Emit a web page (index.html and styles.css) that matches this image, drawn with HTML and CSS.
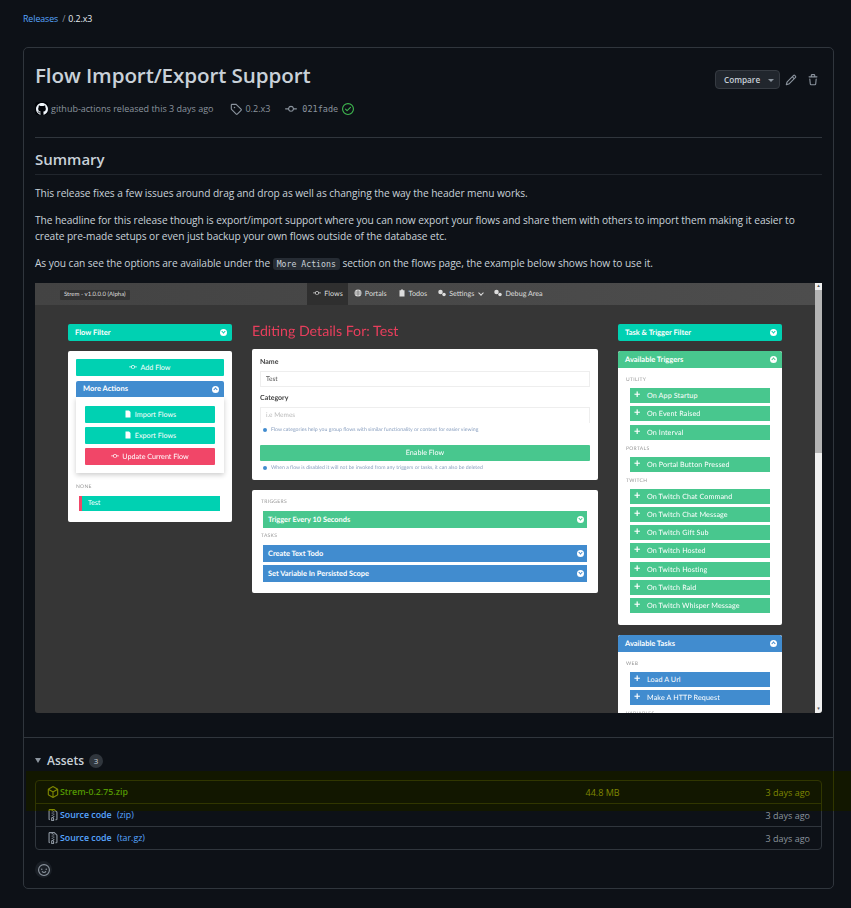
FILE: index.html
```html
<!DOCTYPE html>
<html lang="en">
<head>
    <meta charset="UTF-8">
    <meta name="viewport" content="width=device-width, initial-scale=1.0">
    <title>Release 0.2.x3</title>
    <link rel="stylesheet" href="styles.css">
</head>
<body>
    <svg class="sprites" width="0" height="0">
        <symbol id="i-github" viewBox="0 0 16 16"><path d="M8 0C3.58 0 0 3.58 0 8c0 3.54 2.29 6.53 5.47 7.59.4.07.55-.17.55-.38 0-.19-.01-.82-.01-1.49-2.01.37-2.53-.49-2.69-.94-.09-.23-.48-.94-.82-1.13-.28-.15-.68-.52-.01-.53.63-.01 1.08.58 1.23.82.72 1.21 1.87.87 2.33.66.07-.52.28-.87.51-1.07-1.78-.2-3.64-.89-3.64-3.95 0-.87.31-1.59.82-2.15-.08-.2-.36-1.02.08-2.12 0 0 .67-.21 2.2.82.64-.18 1.32-.27 2-.27.68 0 1.36.09 2 .27 1.53-1.04 2.2-.82 2.2-.82.44 1.1.16 1.92.08 2.12.51.56.82 1.27.82 2.15 0 3.07-1.87 3.75-3.65 3.95.29.25.54.73.54 1.48 0 1.07-.01 1.93-.01 2.2 0 .21.15.46.55.38A8.013 8.013 0 0016 8c0-4.42-3.58-8-8-8z"/></symbol>
        <symbol id="i-tag" viewBox="0 0 16 16"><path d="M1 7.775V2.75C1 1.784 1.784 1 2.75 1h5.025c.464 0 .91.184 1.238.513l6.25 6.25a1.75 1.75 0 0 1 0 2.474l-5.026 5.026a1.75 1.75 0 0 1-2.474 0l-6.25-6.25A1.752 1.752 0 0 1 1 7.775Zm1.5 0c0 .066.026.13.073.177l6.25 6.25a.25.25 0 0 0 .354 0l5.025-5.025a.25.25 0 0 0 0-.354l-6.25-6.25a.25.25 0 0 0-.177-.073H2.75a.25.25 0 0 0-.25.25ZM6 5a1 1 0 1 1 0 2 1 1 0 0 1 0-2Z"/></symbol>
        <symbol id="i-commit" viewBox="0 0 16 16"><path d="M11.93 8.5a4.002 4.002 0 0 1-7.86 0H.75a.75.75 0 0 1 0-1.5h3.32a4.002 4.002 0 0 1 7.86 0h3.32a.75.75 0 0 1 0 1.5Zm-1.43-.75a2.5 2.5 0 1 0-5 0 2.5 2.5 0 0 0 5 0Z"/></symbol>
        <symbol id="i-check" viewBox="0 0 16 16"><path d="M0 8a8 8 0 1 1 16 0A8 8 0 0 1 0 8Zm1.5 0a6.5 6.5 0 1 0 13 0 6.5 6.5 0 0 0-13 0Zm10.28-1.72-4.5 4.5a.75.75 0 0 1-1.06 0l-2-2a.751.751 0 0 1 .018-1.042.751.751 0 0 1 1.042-.018l1.47 1.47 3.97-3.97a.751.751 0 0 1 1.042.018.751.751 0 0 1 .018 1.042Z"/></symbol>
        <symbol id="i-pencil" viewBox="0 0 16 16"><path d="M11.013 1.427a1.75 1.75 0 0 1 2.474 0l1.086 1.086a1.75 1.75 0 0 1 0 2.474l-8.61 8.61c-.21.21-.47.364-.756.445l-3.251.93a.75.75 0 0 1-.927-.928l.929-3.25c.081-.286.235-.547.445-.758l8.61-8.61Zm.176 4.823L9.75 4.81l-6.286 6.287a.253.253 0 0 0-.064.108l-.558 1.953 1.953-.558a.253.253 0 0 0 .108-.064Zm1.238-3.763a.25.25 0 0 0-.354 0L10.811 3.75l1.439 1.44 1.263-1.263a.25.25 0 0 0 0-.354Z"/></symbol>
        <symbol id="i-trash" viewBox="0 0 16 16"><path d="M11 1.75V3h2.25a.75.75 0 0 1 0 1.5H2.75a.75.75 0 0 1 0-1.5H5V1.75C5 .784 5.784 0 6.75 0h2.5C10.216 0 11 .784 11 1.75ZM4.496 6.675l.66 6.6a.25.25 0 0 0 .249.225h5.19a.25.25 0 0 0 .249-.225l.66-6.6a.75.75 0 0 1 1.492.149l-.66 6.6A1.748 1.748 0 0 1 10.595 15h-5.19a1.75 1.75 0 0 1-1.741-1.575l-.66-6.6a.75.75 0 1 1 1.492-.15ZM6.5 1.75V3h3V1.75a.25.25 0 0 0-.25-.25h-2.5a.25.25 0 0 0-.25.25Z"/></symbol>
        <symbol id="i-package" viewBox="0 0 16 16"><path d="m8.878.392 5.25 3.045c.54.314.872.89.872 1.514v6.098a1.75 1.75 0 0 1-.872 1.514l-5.25 3.045a1.75 1.75 0 0 1-1.756 0l-5.25-3.045A1.75 1.75 0 0 1 1 11.049V4.951c0-.624.332-1.201.872-1.514L7.122.392a1.75 1.75 0 0 1 1.756 0ZM7.875 1.69l-4.63 2.685L8 7.133l4.755-2.758-4.63-2.685a.248.248 0 0 0-.25 0ZM2.5 5.677v5.372c0 .09.047.171.125.216l4.625 2.683V8.432Zm6.25 8.271 4.625-2.683a.25.25 0 0 0 .125-.216V5.677L8.75 8.432Z"/></symbol>
        <symbol id="i-zip" viewBox="0 0 16 16"><path d="M3.5 1.75v11.5c0 .09.048.173.126.217a.75.75 0 0 1-.752 1.298A1.748 1.748 0 0 1 2 13.25V1.75C2 .784 2.784 0 3.75 0h5.586c.464 0 .909.185 1.237.513l2.914 2.914c.329.328.513.773.513 1.237v8.586A1.75 1.75 0 0 1 12.25 15h-.5a.75.75 0 0 1 0-1.5h.5a.25.25 0 0 0 .25-.25V4.664a.25.25 0 0 0-.073-.177L9.513 1.573a.25.25 0 0 0-.177-.073H7.25a.75.75 0 0 1 0 1.5h-.5a.75.75 0 0 1 0-1.5h-3a.25.25 0 0 0-.25.25Zm3.75 8.75h.5c.966 0 1.75.784 1.75 1.75v3a.75.75 0 0 1-.75.75h-2.5a.75.75 0 0 1-.75-.75v-3c0-.966.784-1.75 1.75-1.75ZM6 5.25a.75.75 0 0 1 .75-.75h.5a.75.75 0 0 1 0 1.5h-.5A.75.75 0 0 1 6 5.25Zm.75 2.25h.5a.75.75 0 0 1 0 1.5h-.5a.75.75 0 0 1 0-1.5ZM8 6.75A.75.75 0 0 1 8.75 6h.5a.75.75 0 0 1 0 1.5h-.5A.75.75 0 0 1 8 6.75ZM8.75 3h.5a.75.75 0 0 1 0 1.5h-.5a.75.75 0 0 1 0-1.5ZM8 9.75A.75.75 0 0 1 8.75 9h.5a.75.75 0 0 1 0 1.5h-.5A.75.75 0 0 1 8 9.75Zm-1 2.5v2.25h1v-2.25a.25.25 0 0 0-.25-.25h-.5a.25.25 0 0 0-.25.25Z"/></symbol>
        <symbol id="i-smiley" viewBox="0 0 16 16"><path d="M8 0a8 8 0 1 1 0 16A8 8 0 0 1 8 0ZM1.5 8a6.5 6.5 0 1 0 13 0 6.5 6.5 0 0 0-13 0Zm3.82 1.636a.75.75 0 0 1 1.038.175l.007.009c.103.118.22.222.35.31.264.178.683.37 1.285.37.602 0 1.02-.192 1.285-.371.13-.088.247-.192.35-.31l.007-.008a.75.75 0 0 1 1.222.87l-.022-.015c.02.013.021.015.021.015v.001l-.001.002-.002.003-.005.007-.014.019a2.066 2.066 0 0 1-.184.213c-.16.166-.338.316-.53.445-.63.418-1.37.638-2.127.629-.946 0-1.652-.308-2.126-.63a3.331 3.331 0 0 1-.715-.657l-.014-.02-.005-.006-.002-.003v-.002h-.001l.613-.432-.614.43a.75.75 0 0 1 .183-1.044ZM12 7a1 1 0 1 1-2 0 1 1 0 0 1 2 0ZM5 8a1 1 0 1 1 0-2 1 1 0 0 1 0 2Z"/></symbol>
        <!-- rough app icons for the screenshot -->
        <symbol id="i-globe" viewBox="0 0 16 16"><circle cx="8" cy="8" r="7"/><path d="M1 6h14M1 10h14M8 1v14" fill="none" stroke="#494949" stroke-width="1"/></symbol>
        <symbol id="i-clip" viewBox="0 0 16 16"><path d="M3 2.500h3V1h4v1.500h3V15H3Z"/></symbol>
        <symbol id="i-gears" viewBox="0 0 16 16"><circle cx="5" cy="6" r="4.500"/><circle cx="12" cy="11" r="3.500"/></symbol>
        <symbol id="i-file" viewBox="0 0 16 16"><path d="M3 1h7l3 3v11H3Z"/></symbol>
    </svg>

    <nav class="crumbs"><a href="#">Releases</a><span class="crumb-sep">/</span><span>0.2.x3</span></nav>

    <section class="release">
        <header class="release-head">
            <div class="head-row">
                <h1>Flow Import/Export Support</h1>
                <div class="head-actions">
                    <button class="compare">Compare<span class="caret"></span></button>
                    <svg class="octicon action-icon"><use href="#i-pencil"/></svg>
                    <svg class="octicon action-icon"><use href="#i-trash"/></svg>
                </div>
            </div>
            <div class="meta">
                <span class="avatar"><svg class="octicon"><use href="#i-github"/></svg></span>
                <span class="meta-author">github-actions released this 3 days ago</span>
                <svg class="octicon meta-tag"><use href="#i-tag"/></svg>
                <span>0.2.x3</span>
                <svg class="octicon meta-commit"><use href="#i-commit"/></svg>
                <code class="sha">021fade</code>
                <svg class="octicon meta-check"><use href="#i-check"/></svg>
            </div>
        </header>

        <div class="markdown">
            <h2>Summary</h2>
            <p>This release fixes a few issues around drag and drop as well as changing the way the header menu works.</p>
            <p>The headline for this release though is export/import support where you can now export your flows and share them with others to import them making it easier to create pre-made setups or even just backup your own flows outside of the database etc.</p>
            <p>As you can see the options are available under the <code>More Actions</code> section on the flows page, the example below shows how to use it.</p>

            <div class="shot">
                <div class="shot-page">
                    <div class="app-bar">
                        <span class="app-version">Strem - v1.0.0.0 (Alpha)</span>
                        <div class="app-nav">
                            <span class="app-tab active"><svg class="app-icon"><use href="#i-commit"/></svg>Flows</span>
                            <span class="app-tab"><svg class="app-icon"><use href="#i-globe"/></svg>Portals</span>
                            <span class="app-tab"><svg class="app-icon"><use href="#i-clip"/></svg>Todos</span>
                            <span class="app-tab"><svg class="app-icon"><use href="#i-gears"/></svg>Settings<i class="tab-chevron"></i></span>
                            <span class="app-tab"><svg class="app-icon"><use href="#i-gears"/></svg>Debug Area</span>
                        </div>
                    </div>
                    <div class="app-cols">
                        <div class="app-col">
                            <div class="panel-bar teal">Flow Filter<i class="dot"></i></div>
                            <div class="app-card left-card">
                                <div class="app-btn teal add-flow"><svg class="app-icon"><use href="#i-commit"/></svg>Add Flow</div>
                                <div class="panel-bar blue more-bar">More Actions<i class="dot up"></i></div>
                                <div class="more-body">
                                    <div class="app-btn teal"><svg class="app-icon"><use href="#i-file"/></svg>Import Flows</div>
                                    <div class="app-btn teal"><svg class="app-icon"><use href="#i-file"/></svg>Export Flows</div>
                                    <div class="app-btn red"><svg class="app-icon"><use href="#i-commit"/></svg>Update Current Flow</div>
                                </div>
                                <div class="app-label none-label">NONE</div>
                                <div class="flow-row">Test</div>
                            </div>
                        </div>

                        <div class="app-col">
                            <div class="edit-title">Editing Details For: Test</div>
                            <div class="app-card form-card">
                                <div class="form-label">Name</div>
                                <div class="form-input">Test</div>
                                <div class="form-label">Category</div>
                                <div class="form-input empty">i.e Memes</div>
                                <div class="hint">Flow categories help you group flows with similar functionality or context for easier viewing</div>
                                <div class="app-btn green enable">Enable Flow</div>
                                <div class="hint">When a flow is disabled it will not be invoked from any triggers or tasks, it can also be deleted</div>
                            </div>
                            <div class="app-card steps-card">
                                <div class="app-label">TRIGGERS</div>
                                <div class="step green">Trigger Every 10 Seconds<i class="dot"></i></div>
                                <div class="app-label tasks-label">TASKS</div>
                                <div class="step blue">Create Text Todo<i class="dot"></i></div>
                                <div class="step blue">Set Variable In Persisted Scope<i class="dot"></i></div>
                            </div>
                        </div>

                        <div class="app-col">
                            <div class="panel-bar teal">Task &amp; Trigger Filter<i class="dot"></i></div>
                            <div class="app-card list-card">
                                <div class="panel-bar green">Available Triggers<i class="dot up"></i></div>
                                <div class="list-body">
                                    <div class="app-label">UTILITY</div>
                                    <div class="add-item green">On App Startup</div>
                                    <div class="add-item green">On Event Raised</div>
                                    <div class="add-item green">On Interval</div>
                                    <div class="app-label">PORTALS</div>
                                    <div class="add-item green">On Portal Button Pressed</div>
                                    <div class="app-label">TWITCH</div>
                                    <div class="add-item green">On Twitch Chat Command</div>
                                    <div class="add-item green">On Twitch Chat Message</div>
                                    <div class="add-item green">On Twitch Gift Sub</div>
                                    <div class="add-item green">On Twitch Hosted</div>
                                    <div class="add-item green">On Twitch Hosting</div>
                                    <div class="add-item green">On Twitch Raid</div>
                                    <div class="add-item green">On Twitch Whisper Message</div>
                                </div>
                            </div>
                            <div class="app-card list-card">
                                <div class="panel-bar blue">Available Tasks<i class="dot up"></i></div>
                                <div class="list-body">
                                    <div class="app-label">WEB</div>
                                    <div class="add-item blue">Load A Url</div>
                                    <div class="add-item blue">Make A HTTP Request</div>
                                    <div class="app-label">VARIABLES</div>
                                </div>
                            </div>
                        </div>
                    </div>
                </div>
                <div class="shot-scroll"><div class="scroll-arrow">▴</div><div class="scroll-thumb"></div><div class="scroll-arrow down">▾</div></div>
            </div>
        </div>

        <footer class="assets">
            <div class="assets-title"><span class="assets-caret"></span><h3>Assets</h3><span class="counter">3</span></div>
            <div class="asset-list">
                <div class="asset-row">
                    <span class="asset-name"><svg class="octicon"><use href="#i-package"/></svg><a href="#"><b>Strem-0.2.75.zip</b></a></span>
                    <span class="asset-size">44.8 MB</span>
                    <span class="asset-date">3 days ago</span>
                </div>
                <div class="asset-row">
                    <span class="asset-name"><svg class="octicon"><use href="#i-zip"/></svg><a href="#"><b>Source code</b> (zip)</a></span>
                    <span class="asset-date">3 days ago</span>
                </div>
                <div class="asset-row">
                    <span class="asset-name"><svg class="octicon"><use href="#i-zip"/></svg><a href="#"><b>Source code</b> (tar.gz)</a></span>
                    <span class="asset-date">3 days ago</span>
                </div>
            </div>
            <span class="reaction"><svg class="octicon"><use href="#i-smiley"/></svg></span>
        </footer>
    </section>

    <div class="highlight"></div>
    <div class="highlight-glow"></div>
</body>
</html>
```

FILE: styles.css
```css
html, body {
    height: 100%;
}
body {
    margin: 0;
    padding: 0 17px 0 23px;
    background-color: #0d1117;
    color: #c9d1d9;
    font-family: "Open Sans", "Noto Sans", sans-serif;
    font-size: 10.2px;
    letter-spacing: -0.07px;
    overflow: hidden;
}
a {
    color: #58a6ff;
    text-decoration: none;
}
.sprites {
    position: absolute;
}
.octicon {
    width: 12px;
    height: 12px;
    fill: currentColor;
    flex: none;
}

.crumbs {
    height: 47px;
    padding-top: 13px;
    box-sizing: border-box;
    font-size: 8.8px;
    line-height: 13px;
    color: #e6edf3;
}
.crumb-sep {
    margin: 0 3px 0 4px;
    color: #8b949e;
}

.release {
    border: 1px solid #30363d;
    border-radius: 5px;
    height: 842px;
    box-sizing: border-box;
}
.release-head {
    margin: 0 11px;
    height: 90px;
    box-sizing: border-box;
    border-bottom: 1px solid #30363d;
}
.head-row {
    display: flex;
    justify-content: space-between;
    align-items: flex-start;
    padding-top: 12px;
}
h1 {
    margin: 0;
    font-size: 20.6px;
    line-height: 30px;
    font-weight: 600;
    letter-spacing: -0.1px;
}
.head-actions {
    display: flex;
    align-items: center;
    padding-top: 10px;
    color: #8b949e;
}
.compare {
    width: 65px;
    height: 19px;
    padding: 0 0 0 8px;
    text-align: left;
    background-color: #21262d;
    color: #c9d1d9;
    border: 1px solid #363b42;
    border-radius: 4px;
    font-family: inherit;
    font-size: 8.2px;
    font-weight: 600;
}
.caret {
    display: inline-block;
    margin-left: 8px;
    vertical-align: 1px;
    border: 3px solid transparent;
    border-top-color: #8b949e;
    border-bottom: 0;
}
.action-icon {
    margin-left: 5px;
    margin-right: 5px;
}
.action-icon + .action-icon {
    margin-left: 5px;
    margin-right: 3px;
}
.meta {
    display: flex;
    align-items: center;
    margin-top: 11px;
    height: 15px;
    font-size: 9px;
    letter-spacing: 0;
    color: #8b949e;
}
.avatar {
    display: flex;
    align-items: center;
    justify-content: center;
    width: 13px;
    height: 13px;
    margin-right: 3px;
    border-radius: 3px;
    background-color: #010409;
    color: #f0f6fc;
}
.meta-author {
    margin-right: 17px;
}
.meta-tag {
    margin-right: 3px;
}
.meta-commit {
    margin-left: 15px;
    margin-right: 5px;
}
.sha {
    font-family: "DejaVu Sans Mono", "Liberation Mono", monospace;
    font-size: 8.5px;
}
.meta-check {
    margin-left: 4px;
    color: #3fb950;
}

.markdown {
    margin: 0 11px;
    height: 599px;
    box-sizing: border-box;
}
h2 {
    margin: 0;
    padding-top: 10px;
    height: 37px;
    box-sizing: border-box;
    border-bottom: 1px solid #21262d;
    font-size: 15px;
    line-height: 22px;
    font-weight: 600;
    letter-spacing: 0;
}
.markdown p {
    margin: 0 0 11px;
    line-height: 16px;
}
.markdown h2 + p {
    margin-top: 10px;
}
.markdown code {
    padding: 1px 4px;
    border-radius: 3px;
    background-color: #262c34;
    font-family: "DejaVu Sans Mono", "Liberation Mono", monospace;
    font-size: 8.2px;
    letter-spacing: 0;
}

/* yellow band that lies over the first asset row */
.highlight, .highlight-glow {
    position: absolute;
    left: 26px;
    right: 0;
    top: 771px;
    height: 40px;
}
.highlight {
    background-color: #e8e800;
    mix-blend-mode: multiply;
}
.highlight-glow {
    background-color: rgba(140, 150, 0, 0.05);
}

/* the embedded app screenshot */
.shot {
    display: flex;
    height: 430px;
    overflow: hidden;
    border-radius: 0 0 3px 3px;
    background-color: #363636;
    font-family: "Lato", "Open Sans", sans-serif;
    letter-spacing: 0;
    text-rendering: geometricPrecision;
    color: #fff;
    filter: blur(0.35px);
}
.shot-page {
    flex: 1;
    min-width: 0;
}
.shot-scroll {
    display: flex;
    flex-direction: column;
    width: 7px;
    background-color: #f0f0f0;
    color: #555;
    font-size: 5px;
    line-height: 7px;
    text-align: center;
}
.scroll-thumb {
    height: 163px;
    background-color: #b4b4b4;
}
.scroll-arrow.down {
    margin-top: auto;
}
.app-bar {
    position: relative;
    display: flex;
    justify-content: center;
    height: 22px;
    background: linear-gradient(to right, #434343, #4d4d4d);
}
.app-version {
    position: absolute;
    left: 25px;
    top: 7px;
    padding: 0 4px;
    height: 10px;
    line-height: 10px;
    font-size: 6px;
    background-color: #333;
    border-radius: 1px;
    color: #ddd;
}
.app-nav {
    display: flex;
    margin-left: 5px;
}
.app-icon {
    width: 8px;
    height: 8px;
    margin-right: 3px;
    vertical-align: -1px;
    fill: currentColor;
}
.app-tab {
    padding: 0 5px 0 6px;
    line-height: 22px;
    font-size: 7.2px;
    color: #ddd;
}
.app-tab.active {
    background-color: #2f2f2f;
}
.tab-chevron {
    display: inline-block;
    width: 3px;
    height: 3px;
    margin-left: 5px;
    vertical-align: 1px;
    border-right: 1px solid #ddd;
    border-bottom: 1px solid #ddd;
    transform: rotate(45deg);
}
.app-cols {
    display: grid;
    grid-template-columns: 164px 346px 164px;
    column-gap: 20px;
    padding: 19px 0 0 33px;
}
.panel-bar {
    position: relative;
    height: 17px;
    padding-left: 7px;
    line-height: 17px;
    font-size: 7.5px;
    font-weight: 700;
    color: #fff;
    border-radius: 2px 2px 0 0;
}
.app-col > .panel-bar {
    border-radius: 2px;
    margin-bottom: 10px;
}
.dot {
    position: absolute;
    right: 5px;
    top: 5px;
    width: 7px;
    height: 7px;
    border-radius: 50%;
    background-color: #fff;
}
.dot::after {
    content: "";
    position: absolute;
    left: 2px;
    top: 1.200px;
    width: 2px;
    height: 2px;
    border-right: 1px solid #888;
    border-bottom: 1px solid #888;
    transform: rotate(45deg);
}
.dot.up::after {
    top: 2.400px;
    transform: rotate(225deg);
}
.teal > .dot::after {
    border-color: #00d1b2;
}
.blue > .dot::after {
    border-color: #418ccf;
}
.green > .dot::after {
    border-color: #48c78e;
}
.teal {
    background-color: #00d1b2;
}
.blue {
    background-color: #418ccf;
}
.green {
    background-color: #48c78e;
}
.red {
    background-color: #f14668;
}
.app-card {
    background-color: #fff;
    border-radius: 2px;
    color: #444;
    margin-bottom: 10px;
}
.left-card {
    height: 171px;
    box-sizing: border-box;
    padding: 8px;
}
.app-btn {
    height: 17px;
    line-height: 17px;
    text-align: center;
    font-size: 7.2px;
    color: #fff;
    border-radius: 1px;
}
.add-flow {
    margin-bottom: 5px;
}
.more-bar {
    height: 16px;
    line-height: 16px;
    color: #fff;
}
.more-body {
    display: flex;
    flex-direction: column;
    gap: 4px;
    height: 76px;
    box-sizing: border-box;
    padding: 9px 9px 0;
    box-shadow: 0 2px 5px rgba(0, 0, 0, 0.2);
}
.app-label {
    font-size: 5px;
    line-height: 6px;
    letter-spacing: 0.3px;
    color: #999;
}
.none-label {
    margin-top: 11px;
}
.flow-row {
    margin: 6px 4px 0 3px;
    height: 15px;
    line-height: 15px;
    padding-left: 6px;
    border-left: 3px solid #f14668;
    background-color: #00d1b2;
    color: #fff;
    font-size: 7px;
}
.edit-title {
    height: 25px;
    font-size: 14.2px;
    line-height: 16px;
    color: #e83e5c;
}
.form-card {
    height: 131px;
    box-sizing: border-box;
    padding: 9px 8px 0;
}
.form-label {
    font-size: 7px;
    line-height: 8px;
    font-weight: 700;
    color: #444;
}
.form-input {
    height: 16px;
    margin: 5px 0 7px;
    padding-left: 5px;
    line-height: 16px;
    font-size: 6.5px;
    border: 1px solid #eee;
    box-sizing: border-box;
    color: #555;
}
.form-input.empty {
    margin-bottom: 3px;
    border-bottom: 0;
    color: #bbb;
}
.hint {
    position: relative;
    height: 8px;
    padding-left: 11px;
    line-height: 8px;
    font-size: 5.2px;
    color: #8aa0c0;
}
.hint::before {
    content: "";
    position: absolute;
    left: 3px;
    top: 2px;
    width: 4px;
    height: 4px;
    border-radius: 50%;
    background-color: #418ccf;
}
.enable {
    margin: 11px 0 3px;
    height: 16px;
    line-height: 16px;
}
.steps-card {
    height: 103px;
    box-sizing: border-box;
    padding: 9px 9px 0;
}
.steps-card .app-label {
    margin-bottom: 6px;
}
.steps-card .tasks-label {
    margin-top: 5px;
}
.step {
    position: relative;
    margin: 0 2px 3px;
    height: 17px;
    padding-left: 5px;
    line-height: 17px;
    font-size: 7.4px;
    font-weight: 700;
    color: #fff;
}
.step .dot {
    right: 3px;
}
.list-card {
    overflow: hidden;
}
.list-body {
    padding: 9px 12px 8px 8px;
}
.list-body .app-label {
    height: 11px;
    margin-top: 6px;
}
.list-body .app-label:first-child {
    margin-top: 0;
}
.add-item {
    margin: 0 0 3.3px 4px;
    height: 15px;
    padding-left: 17px;
    position: relative;
    line-height: 15px;
    font-size: 7.2px;
    letter-spacing: 0.1px;
    color: #fff;
}
.add-item::before {
    content: "+";
    position: absolute;
    left: 4px;
    top: -1px;
    font-size: 11px;
    font-weight: 700;
}

.assets {
    padding: 0 11px;
    height: 151px;
    box-sizing: border-box;
    border-top: 1px solid #30363d;
    font-size: 9px;
    letter-spacing: 0;
}
.assets-title {
    display: flex;
    align-items: center;
    height: 21px;
    margin-top: 12px;
}
.assets-caret {
    border: 3px solid transparent;
    border-top: 5px solid #8b949e;
    border-bottom: 0;
    margin-right: 6px;
}
h3 {
    margin: 0 5px 0 0;
    font-size: 12px;
    font-weight: 600;
}
.counter {
    width: 14px;
    height: 14px;
    line-height: 14px;
    text-align: center;
    border-radius: 50%;
    background-color: #30363d;
    font-size: 8px;
}
.asset-list {
    margin-top: 9px;
    border: 1px solid #30363d;
    border-radius: 4px;
}
.asset-row {
    display: flex;
    align-items: center;
    height: 23px;
    padding: 0 11px;
    box-sizing: border-box;
    border-bottom: 1px solid #30363d;
}
.asset-row:last-child {
    height: 22px;
    border-bottom: 0;
}
.asset-name {
    display: flex;
    align-items: center;
    gap: 1px;
    flex: 1;
    font-size: 8.8px;
    color: #8b949e;
}
.asset-name b {
    font-weight: 600;
    margin-right: 3px;
}
.asset-size {
    width: 180px;
    color: #8b949e;
}
.asset-date {
    color: #8b949e;
}
.reaction {
    display: flex;
    align-items: center;
    justify-content: center;
    width: 17px;
    height: 17px;
    margin-top: 11px;
    border-radius: 50%;
    background-color: #1a1f26;
    color: #8b949e;
}
```
